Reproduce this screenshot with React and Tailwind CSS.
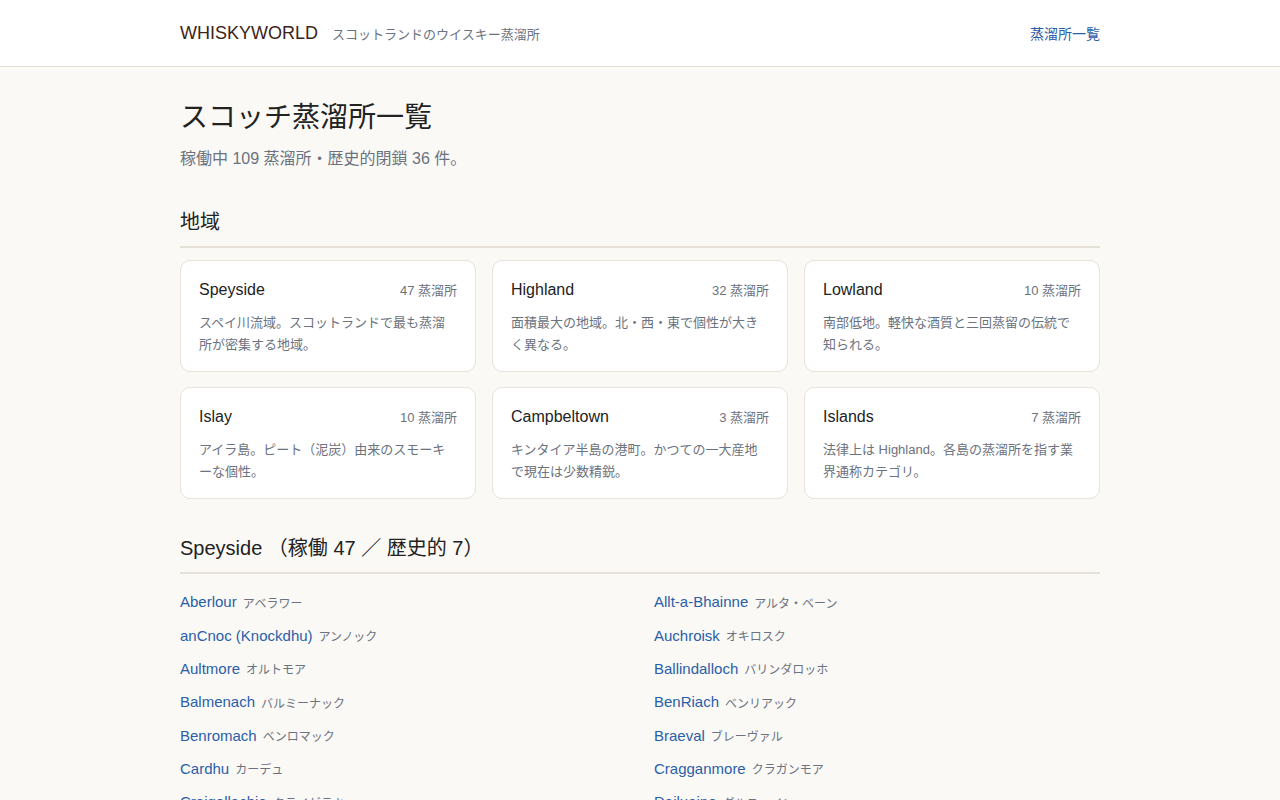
import React from "react";

const regions = [
  { name: "Speyside", count: 47, desc: "スペイ川流域。スコットランドで最も蒸溜所が密集する地域。" },
  { name: "Highland", count: 32, desc: "面積最大の地域。北・西・東で個性が大きく異なる。" },
  { name: "Lowland", count: 10, desc: "南部低地。軽快な酒質と三回蒸留の伝統で知られる。" },
  { name: "Islay", count: 10, desc: "アイラ島。ピート（泥炭）由来のスモーキーな個性。" },
  { name: "Campbeltown", count: 3, desc: "キンタイア半島の港町。かつての一大産地で現在は少数精鋭。" },
  { name: "Islands", count: 7, desc: "法律上は Highland。各島の蒸溜所を指す業界通称カテゴリ。" },
];

const distilleries = [
  ["Aberlour", "アベラワー"],
  ["Allt-a-Bhainne", "アルタ・ベーン"],
  ["anCnoc (Knockdhu)", "アンノック"],
  ["Auchroisk", "オキロスク"],
  ["Aultmore", "オルトモア"],
  ["Ballindalloch", "バリンダロッホ"],
  ["Balmenach", "バルミーナック"],
  ["BenRiach", "ベンリアック"],
  ["Benromach", "ベンロマック"],
  ["Braeval", "ブレーヴァル"],
  ["Cardhu", "カーデュ"],
  ["Cragganmore", "クラガンモア"],
  ["Craigellachie", "クライゲラキ"],
  ["Dailuaine", "ダルユーイン"],
  ["Dalmunach", "ダルムナック"],
  ["Dufftown", "ダフタウン"],
  ["Glenallachie", "グレンアラヒー"],
  ["Glenburgie", "グレンバーギー"],
];

const App = () => {
  return (
    <div
      className="min-h-screen bg-[#faf9f6] text-[#222]"
      style={{ fontFamily: '"Liberation Sans", "Noto Sans CJK JP", sans-serif' }}
    >
      {/* Header */}
      <header className="bg-white border-b border-[#e8e0d4]">
        <div className="w-[920px] mx-auto h-[66px] flex items-center">
          <span className="text-[18px] text-[#3d2418]">WHISKYWORLD</span>
          <span className="ml-[14px] mt-[3px] text-[13px] text-[#6b7280]">スコットランドのウイスキー蒸溜所</span>
          <a href="#" className="ml-auto mt-[2px] text-[14px] text-[#2a5ea8]">
            蒸溜所一覧
          </a>
        </div>
      </header>

      <main className="w-[920px] mx-auto pt-[31px] pb-10">
        <h1 className="text-[28px] leading-[40px] text-[#222]">スコッチ蒸溜所一覧</h1>
        <p className="mt-[9px] text-[16px] leading-[24px] text-[#6b7280]">稼働中 109 蒸溜所・歴史的閉鎖 36 件。</p>

        {/* Regions */}
        <h2 className="mt-[36px] text-[20px] leading-[30px] pb-[9px] border-b-2 border-[#e6e1d8]">地域</h2>
        <div className="mt-[12px] grid grid-cols-3 gap-x-4 gap-y-[15px]">
          {regions.map((r) => (
            <div
              key={r.name}
              className="bg-white border border-[#e8e3da] rounded-[10px] px-[18px] pt-[17px] pb-[15px]"
            >
              <div className="flex items-baseline justify-between leading-[24px]">
                <span className="text-[16px] text-[#222]">{r.name}</span>
                <span className="text-[13px] text-[#6b7280]">{r.count} 蒸溜所</span>
              </div>
              <p className="mt-[9px] text-[13px] leading-[22px] text-[#6b7280]">{r.desc}</p>
            </div>
          ))}
        </div>

        {/* Speyside list */}
        <h2 className="mt-[34px] text-[20px] leading-[30px] pb-[9px] border-b-2 border-[#e6e1d8]">
          Speyside （稼働 47 ／ 歴史的 7）
        </h2>
        <ul className="mt-[12px] grid grid-cols-2 gap-x-7">
          {distilleries.map(([en, ja]) => (
            <li key={en} className="h-[33.33px] flex items-center">
              <a href="#" className="text-[15px] text-[#2a5ea8]">
                {en}
              </a>
              <span className="ml-[6px] mt-[2px] text-[12px] text-[#6b7280]">{ja}</span>
            </li>
          ))}
        </ul>
      </main>
    </div>
  );
};

export default App;
